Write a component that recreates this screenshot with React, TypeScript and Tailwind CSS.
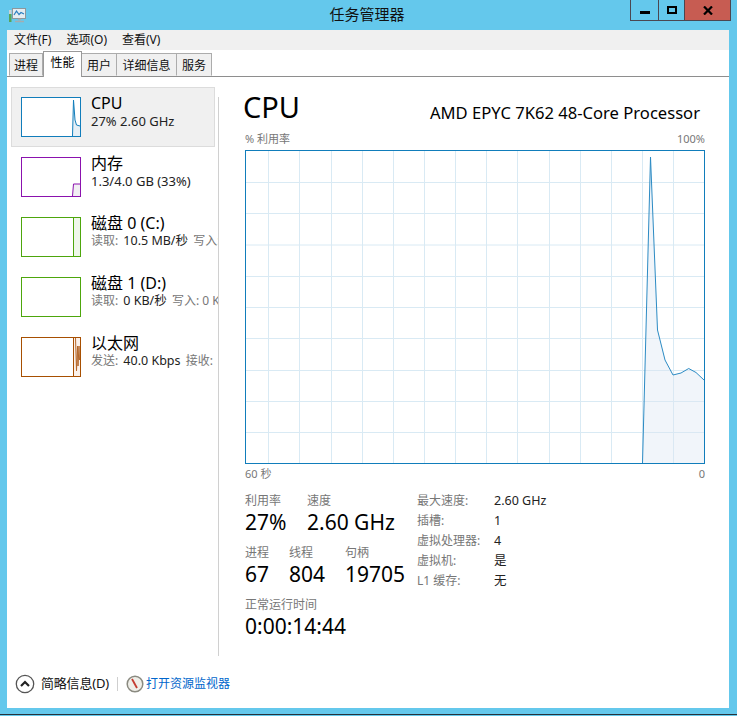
const font = { fontFamily: '"Noto Sans", "Noto Sans CJK SC", sans-serif' };

const tabs = [
  { name: '进程', width: 'w-[34px]' },
  { name: '性能', width: 'w-[39px]' },
  { name: '用户', width: 'w-[35px]' },
  { name: '详细信息', width: 'w-[60px]' },
  { name: '服务', width: 'w-[35px]' },
];

const resources = [
  { name: 'CPU', detail: '27% 2.60 GHz', border: 'border-[#117dbb]', kind: 'cpu' },
  { name: '内存', detail: '1.3/4.0 GB (33%)', border: 'border-[#8b12ae]', kind: 'mem' },
  { name: '磁盘 0 (C:)', label: '读取:', detail: '10.5 MB/秒', extra: '写入:', border: 'border-[#4da60c]', kind: 'disk' },
  { name: '磁盘 1 (D:)', label: '读取:', detail: '0 KB/秒', extra: '写入: 0 KB/秒', border: 'border-[#4da60c]', kind: 'none' },
  { name: '以太网', label: '发送:', detail: '40.0 Kbps', extra: '接收:', border: 'border-[#a74f01]', kind: 'net' },
];

function Spark({ kind }: { kind: string }) {
  if (kind === 'cpu')
    return (
      <svg className="absolute inset-0 h-full w-full" viewBox="0 0 58 38">
        <path d="M50.5 38 L51.5 2 L53 22 L54.5 27 L58 28 L58 38 Z" fill="#e6eff6" />
        <path d="M50.5 38 L51.5 2 L53 22 L54.5 27 L58 28" fill="none" stroke="#117dbb" strokeWidth="1" />
      </svg>
    );
  if (kind === 'mem')
    return (
      <svg className="absolute inset-0 h-full w-full" viewBox="0 0 58 38">
        <path d="M50.5 38 L51.5 26 L58 26 L58 38 Z" fill="#f1eff3" />
        <path d="M50.5 38 L51.5 26 L58 26" fill="none" stroke="#8b12ae" strokeWidth="1" />
      </svg>
    );
  if (kind === 'disk')
    return (
      <svg className="absolute inset-0 h-full w-full" viewBox="0 0 58 38">
        <rect x="51" y="0" width="7" height="38" fill="#eff7ea" />
        <path d="M51.5 0 L51.5 38" stroke="#4da60c" strokeWidth="1" />
      </svg>
    );
  if (kind === 'net')
    return (
      <svg className="absolute inset-0 h-full w-full" viewBox="0 0 58 38">
        <rect x="51" y="0" width="7" height="38" fill="#fbf1ea" />
        <path d="M51.5 0 L51.5 38" stroke="#a74f01" strokeWidth="1" />
        <path d="M53.5 0 L54.5 33 L55.5 8 L56 28 L57 8 L57.5 22" fill="none" stroke="#b5672a" strokeWidth="1" />
      </svg>
    );
  return null;
}

function ResourceItem({ item, selected }: { item: (typeof resources)[number]; selected: boolean }) {
  return (
    <div
      className={`flex h-[60px] w-[204px] shrink-0 border pl-[9px] pt-[9px] ${
        selected ? 'border-[#dcdcdc] bg-[#f0f0f0]' : 'border-transparent'
      }`}
    >
      <div className={`relative h-10 w-[60px] shrink-0 border bg-white ${item.border}`}>
        <Spark kind={item.kind} />
      </div>
      <div className="ml-[10px] min-w-0 -mt-[2px]">
        <div className="h-[19px] text-[16px] leading-[16px] whitespace-nowrap text-black">{item.name}</div>
        <div className={`leading-[14px] whitespace-nowrap text-[#222] ${item.label ? 'text-[12.5px]' : 'text-[13px]'}`}>
          {item.label && <span className="mr-[2px] text-[12px] text-[#777]">{item.label} </span>}
          {item.detail}
          {item.extra && <span className="ml-[2px] text-[12px] text-[#777]"> {item.extra}</span>}
        </div>
      </div>
    </div>
  );
}

function CpuGraph() {
  const vertical = [23, 54, 86, 117, 148, 179, 210, 241, 272, 304, 335, 366, 397, 428];
  const horizontal = [32, 63, 94.5, 126, 157, 188, 220, 251, 282];
  const points = '397.5,313 405.5,7 412.5,180 420,210 428,225 436,223 443.7,218.5 451,222.5 459,230';
  return (
    <svg className="h-[314px] w-[460px] shrink-0" viewBox="0 0 460 314">
      {vertical.map(x => (
        <line key={x} x1={x + 0.5} y1="0" x2={x + 0.5} y2="314" stroke="#d9eaf4" strokeWidth="1" />
      ))}
      {horizontal.map(y => (
        <line key={y} x1="0" y1={y + 0.5} x2="460" y2={y + 0.5} stroke="#d9eaf4" strokeWidth="1" />
      ))}
      <polygon points={`${points} 459,313`} fill="#dbe7f2" fillOpacity="0.4" />
      <polyline points={points} fill="none" stroke="#2c8bc4" strokeWidth="1" />
      <rect x="0.5" y="0.5" width="459" height="313" fill="none" stroke="#117dbb" strokeWidth="1" />
    </svg>
  );
}

function Stat({ label, value, className }: { label: string; value: string; className: string }) {
  return (
    <div className={className}>
      <div className="text-[12px] leading-[16px] text-[#777]">{label}</div>
      <div className="text-[21px] leading-[26px] whitespace-nowrap text-black">{value}</div>
    </div>
  );
}

const specs = [
  ['最大速度:', '2.60 GHz'],
  ['插槽:', '1'],
  ['虚拟处理器:', '4'],
  ['虚拟机:', '是'],
  ['L1 缓存:', '无'],
];

export default function App() {
  return (
    <div className="flex h-[716px] w-[737px] flex-col overflow-hidden bg-[#64c8ec]" style={font}>
      {/* title bar */}
      <div className="relative flex h-[30px] shrink-0 justify-center">
        <svg className="absolute top-[8px] left-[9px] h-[15px] w-[17px]" viewBox="0 0 17 15">
          <rect x="3.5" y="0.5" width="13" height="10" fill="#e4edf2" stroke="#8d979c" />
          <path d="M5 7 L7.5 3 L10 6.5 L12 4.5 L15 6" fill="none" stroke="#2c7fc0" strokeWidth="1.2" />
          <path d="M9 11.5 H12 M6 13.5 H15" stroke="#a4acb0" strokeWidth="1.5" />
          <rect x="0" y="2" width="2.5" height="4" fill="#c9d2d6" />
          <rect x="0" y="6" width="2.5" height="8" fill="#58a558" />
        </svg>
        <div className="pt-[3px] pr-[3px] text-[15px] leading-[22px] text-[#111]">任务管理器</div>
        <div className="absolute top-0 left-[630px] flex h-[21px] w-[101px] border-x border-b border-[#4b4650]">
          <div className="flex w-[28px] items-center justify-center border-r border-[#4b4650] pt-[5px]">
            <div className="h-[3px] w-[10px] bg-black" />
          </div>
          <div className="flex w-[26px] items-center justify-center border-r border-[#4b4650]">
            <div className="h-[8px] w-[10px] border-2 border-black" />
          </div>
          <div className="flex flex-1 items-center justify-center bg-[#c75c52]">
            <svg className="h-[9px] w-[10px]" viewBox="0 0 10 9">
              <path d="M1 0.5 L9 8.5 M9 0.5 L1 8.5" stroke="black" strokeWidth="2.2" />
            </svg>
          </div>
        </div>
      </div>

      {/* window body */}
      <div className="ml-[7px] flex h-[678px] w-[722px] shrink-0 flex-col bg-white">
        <div className="flex h-[20px] shrink-0 gap-[15px] bg-[#f0f0f0] pl-[7px] text-[12px] leading-[20px] text-[#111]">
          <span>文件(F)</span>
          <span>选项(O)</span>
          <span>查看(V)</span>
        </div>
        <div className="flex h-[27px] shrink-0 items-end border-b border-[#8e8e8e] pl-[2px]">
          {tabs.map(tab => (
            <div
              key={tab.name}
              className={
                tab.name === '性能'
                  ? `relative z-10 -mb-px h-[26px] border-x border-t border-[#9a9a9a] bg-white text-center text-[12px] leading-[22px] text-black ${tab.width}`
                  : `h-[23px] border-y border-r border-t-[#acacac] border-r-[#acacac] border-b-transparent bg-[#f0f0f0] text-center text-[12px] leading-[24px] text-[#111] first:border-l first:border-l-[#acacac] ${tab.width}`
              }
            >
              {tab.name}
            </div>
          ))}
        </div>

        <div className="flex min-h-0 flex-1">
          {/* sidebar */}
          <div className="ml-[4px] flex w-[208px] shrink-0 pt-[10px]">
            <div className="flex w-[207px] flex-col overflow-hidden">
              {resources.map((item, i) => (
                <ResourceItem key={item.name} item={item} selected={i === 0} />
              ))}
            </div>
            <div className="mt-[10px] w-px shrink-0 bg-[#d0d0d0]" />
          </div>

          {/* detail pane */}
          <div className="ml-[26px] flex w-[460px] flex-col pt-[13px]">
            <div className="flex h-[36px] items-center justify-between pr-[5px]">
              <span className="-ml-[2px] -mt-[2px] text-[29px] leading-[36px] text-black">CPU</span>
              <span className="pt-[10px] text-[16.6px] leading-[24px] text-black">AMD EPYC 7K62 48-Core Processor</span>
            </div>
            <div className="mt-[3px] mb-[1px] flex h-[20px] items-center justify-between text-[11px] text-[#777]">
              <span>% 利用率</span>
              <span>100%</span>
            </div>
            <CpuGraph />
            <div className="flex h-[20px] items-center justify-between text-[11px] text-[#777]">
              <span>60 秒</span>
              <span>0</span>
            </div>
            <div className="mt-[9px] flex">
              <div className="w-[172px]">
                <div className="flex">
                  <Stat label="利用率" value="27%" className="w-[62px]" />
                  <Stat label="速度" value="2.60 GHz" className="" />
                </div>
                <div className="mt-[10px] flex">
                  <Stat label="进程" value="67" className="w-[44px]" />
                  <Stat label="线程" value="804" className="w-[56px]" />
                  <Stat label="句柄" value="19705" className="" />
                </div>
                <Stat label="正常运行时间" value="0:00:14:44" className="mt-[10px]" />
              </div>
              <div className="-mt-[2px] grid grid-cols-[77px_auto] content-start text-[12px] leading-[20px]">
                {specs.map(([k, v]) => (
                  <div key={k} className="contents">
                    <span className="text-[#777]">{k}</span>
                    <span className="text-[12.5px] text-[#222]">{v}</span>
                  </div>
                ))}
              </div>
            </div>
          </div>
        </div>

        {/* footer */}
        <div className="flex h-[52px] shrink-0 items-center pt-[3px] pl-[8px]">
          <svg className="h-[20px] w-[20px]" viewBox="0 0 20 20">
            <circle cx="10" cy="10" r="8.7" fill="white" stroke="#555" strokeWidth="1.3" />
            <path d="M6 12 L10 8 L14 12" fill="none" stroke="#222" strokeWidth="2.2" />
          </svg>
          <span className="ml-[6px] text-[13px] tracking-[-0.2px] text-[#111]">简略信息(D)</span>
          <div className="mx-[8px] h-[14px] w-px bg-[#cfcfcf]" />
          <svg className="h-[18px] w-[18px]" viewBox="0 0 18 18">
            <circle cx="9" cy="9" r="7.8" fill="#efeee8" stroke="#8a8a80" strokeWidth="1.5" />
            <path d="M6 4 L11 13" stroke="#c43c30" strokeWidth="1.8" />
          </svg>
          <span className="ml-[2px] text-[12px] text-[#0066cc]">打开资源监视器</span>
        </div>
      </div>
      <div className="mt-[6px] h-px w-full bg-[#26323a]" />
    </div>
  );
}
